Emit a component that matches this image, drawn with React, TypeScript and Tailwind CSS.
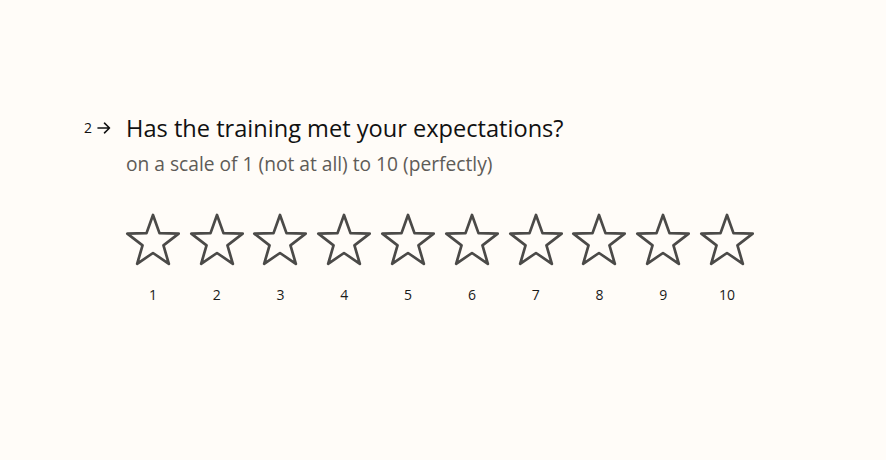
import React from 'react'

const SCALE = [1, 2, 3, 4, 5, 6, 7, 8, 9, 10]

function starPoints(cx: number, cy: number, R: number, r: number) {
  const pts: string[] = []
  for (let i = 0; i < 10; i++) {
    const rad = i % 2 === 0 ? R : r
    const a = (Math.PI / 5) * i
    pts.push(`${(cx + rad * Math.sin(a)).toFixed(2)},${(cy - rad * Math.cos(a)).toFixed(2)}`)
  }
  return pts.join(' ')
}

const STAR = starPoints(28, 29, 27, 11)

function Star() {
  return (
    <svg width="56" height="54" viewBox="0 0 56 54" fill="none">
      <polygon points={STAR} stroke="#4b4a48" strokeWidth="2.7" strokeLinejoin="round" />
    </svg>
  )
}

export default function App() {
  return (
    <div className="min-h-[460px] w-full bg-[#fffcf8] pt-[111px] pl-[84px]" style={{ fontFamily: '"Open Sans", "Liberation Sans", sans-serif' }}>
      <div className="flex">
        <div className="flex h-[34px] w-[42px] items-center gap-[5px] text-[#111]">
          <span className="text-[14px] leading-none">2</span>
          <svg width="14" height="12" viewBox="0 0 14 12" fill="none" stroke="#111" strokeWidth="1.6" strokeLinecap="round" strokeLinejoin="round">
            <path d="M1 6h11.5M7.5 1.2L12.5 6l-5 4.8" />
          </svg>
        </div>
        <div className="flex flex-col">
          <h1 className="text-[23.6px] leading-[34px] text-[#111]">Has the training met your expectations?</h1>
          <p className="mt-[5px] text-[19.2px] leading-[28px] text-[#5e5b57]">on a scale of 1 (not at all) to 10 (perfectly)</p>
          <div className="mt-[35px] -ml-[5px] flex">
            {SCALE.map(n => (
              <div key={n} className="flex w-[63.8px] flex-col items-center">
                <Star />
                <span className="mt-[21px] text-[14px] leading-none text-[#1a1a1a]">{n}</span>
              </div>
            ))}
          </div>
        </div>
      </div>
    </div>
  )
}
